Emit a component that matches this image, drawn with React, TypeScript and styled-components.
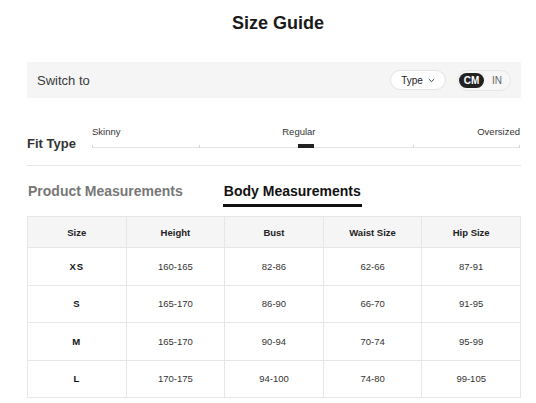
import React, { useState } from "react";
import styled, { createGlobalStyle } from "styled-components";

const Global = createGlobalStyle`
  html, body { margin: 0; padding: 0; background: #fff; }
  body { font-family: "Liberation Sans", Arial, sans-serif; color: #222; }
`;

const Page = styled.div`
  padding: 0 15px 0 27px;
  width: 536px;
  box-sizing: border-box;
`;

const Title = styled.h1`
  margin: 0;
  padding: 13px 0 0 8px;
  height: 62px;
  box-sizing: border-box;
  text-align: center;
  font-size: 18px;
  line-height: 21px;
  font-weight: 700;
  color: #1a1a1a;
`;

const SwitchBar = styled.div`
  height: 36px;
  background: #f5f5f5;
  display: flex;
  align-items: center;
  padding: 0 10px;
`;

const SwitchLabel = styled.span`
  flex: 1;
  font-size: 13px;
  color: #3a3a3a;
`;

const TypeButton = styled.button`
  height: 20px;
  width: 56px;
  border: 1px solid #e3e3e3;
  border-radius: 10px;
  background: #fff;
  display: flex;
  align-items: center;
  justify-content: center;
  gap: 5px;
  padding: 0;
  font-family: inherit;
  font-size: 10px;
  color: #222;
  margin-right: 11px;
`;

const UnitToggle = styled.div`
  height: 21px;
  width: 54px;
  box-sizing: border-box;
  border: 1px solid #e6e6e6;
  border-radius: 11px;
  background: #f7f7f7;
  display: flex;
  align-items: center;
  padding: 0 1px;
`;

const UnitOption = styled.span<{ $active?: boolean }>`
  height: 15px;
  width: ${(p) => (p.$active ? "25px" : "auto")};
  border-radius: 8px;
  display: flex;
  align-items: center;
  justify-content: center;
  font-size: 10px;
  font-weight: ${(p) => (p.$active ? 700 : 400)};
  background: ${(p) => (p.$active ? "#222" : "transparent")};
  color: ${(p) => (p.$active ? "#fff" : "#666")};
  margin-left: ${(p) => (p.$active ? "0" : "8px")};
`;

const FitSection = styled.div`
  display: flex;
  align-items: flex-end;
  padding-top: 28px;
  padding-bottom: 17px;
  border-bottom: 1px solid #e6e6e6;
`;

const FitLabel = styled.span`
  width: 65px;
  flex: none;
  font-size: 13px;
  font-weight: 700;
  color: #333;
  line-height: 15px;
  margin-bottom: -3px;
`;

const Slider = styled.div`
  flex: 1;
  margin-right: 1px;
`;

const SliderLabels = styled.div`
  display: flex;
  justify-content: space-between;
  font-size: 9.5px;
  line-height: 12px;
  color: #333;
`;

const Track = styled.div`
  position: relative;
  height: 1px;
  margin-top: 9px;
  background: #e3e3e3;
`;

const Tick = styled.span<{ $pos: number }>`
  position: absolute;
  bottom: 0;
  left: ${(p) => p.$pos}%;
  width: 1px;
  height: 3px;
  background: #d6d6d6;
  transform: translateX(${(p) => (p.$pos === 100 ? "-1px" : "0")});
`;

const Thumb = styled.span`
  position: absolute;
  left: 50%;
  bottom: 0;
  width: 16px;
  height: 4px;
  background: #222;
  transform: translateX(-50%);
`;

const Tabs = styled.div`
  display: flex;
  gap: 39px;
  margin-top: 17px;
  margin-bottom: 9px;
`;

const Tab = styled.button<{ $active?: boolean }>`
  border: none;
  background: none;
  padding: 0 1px 5px;
  margin: 0;
  font-family: inherit;
  font-size: 14px;
  line-height: 16px;
  font-weight: 700;
  color: ${(p) => (p.$active ? "#111" : "#777")};
  border-bottom: 3px solid ${(p) => (p.$active ? "#111" : "transparent")};
  cursor: pointer;
`;

const Table = styled.table`
  width: 100%;
  table-layout: fixed;
  border-collapse: collapse;
  font-size: 9.5px;
`;

const HeadCell = styled.th`
  height: 30px;
  padding: 0;
  background: #f5f5f5;
  border: 1px solid #e6e6e6;
  font-weight: 700;
  color: #222;
  text-align: center;
`;

const Cell = styled.td<{ $strong?: boolean }>`
  height: 36.5px;
  padding: 0;
  border: 1px solid #e6e6e6;
  text-align: center;
  color: ${(p) => (p.$strong ? "#111" : "#333")};
  font-weight: ${(p) => (p.$strong ? 700 : 400)};
  letter-spacing: ${(p) => (p.$strong ? "1px" : "0")};
`;

const Chevron = () => (
  <svg width="7" height="5" viewBox="0 0 7 5" fill="none">
    <path d="M0.8 1L3.5 3.6L6.2 1" stroke="#333" strokeWidth="0.9" />
  </svg>
);

const headers = ["Size", "Height", "Bust", "Waist Size", "Hip Size"];
const rows = [
  ["XS", "160-165", "82-86", "62-66", "87-91"],
  ["S", "165-170", "86-90", "66-70", "91-95"],
  ["M", "165-170", "90-94", "70-74", "95-99"],
  ["L", "170-175", "94-100", "74-80", "99-105"],
];

export default function App() {
  const [tab, setTab] = useState(1);
  return (
    <Page>
      <Global />
      <Title>Size Guide</Title>
      <SwitchBar>
        <SwitchLabel>Switch to</SwitchLabel>
        <TypeButton>
          Type <Chevron />
        </TypeButton>
        <UnitToggle>
          <UnitOption $active>CM</UnitOption>
          <UnitOption>IN</UnitOption>
        </UnitToggle>
      </SwitchBar>
      <FitSection>
        <FitLabel>Fit Type</FitLabel>
        <Slider>
          <SliderLabels>
            <span>Skinny</span>
            <span>Regular</span>
            <span>Oversized</span>
          </SliderLabels>
          <Track>
            <Tick $pos={0} />
            <Tick $pos={25} />
            <Tick $pos={75} />
            <Tick $pos={100} />
            <Thumb />
          </Track>
        </Slider>
      </FitSection>
      <Tabs>
        <Tab $active={tab === 0} onClick={() => setTab(0)}>
          Product Measurements
        </Tab>
        <Tab $active={tab === 1} onClick={() => setTab(1)}>
          Body Measurements
        </Tab>
      </Tabs>
      <Table>
        <thead>
          <tr>
            {headers.map((h) => (
              <HeadCell key={h}>{h}</HeadCell>
            ))}
          </tr>
        </thead>
        <tbody>
          {rows.map((r) => (
            <tr key={r[0]}>
              {r.map((c, i) => (
                <Cell key={i} $strong={i === 0}>
                  {c}
                </Cell>
              ))}
            </tr>
          ))}
        </tbody>
      </Table>
    </Page>
  );
}
